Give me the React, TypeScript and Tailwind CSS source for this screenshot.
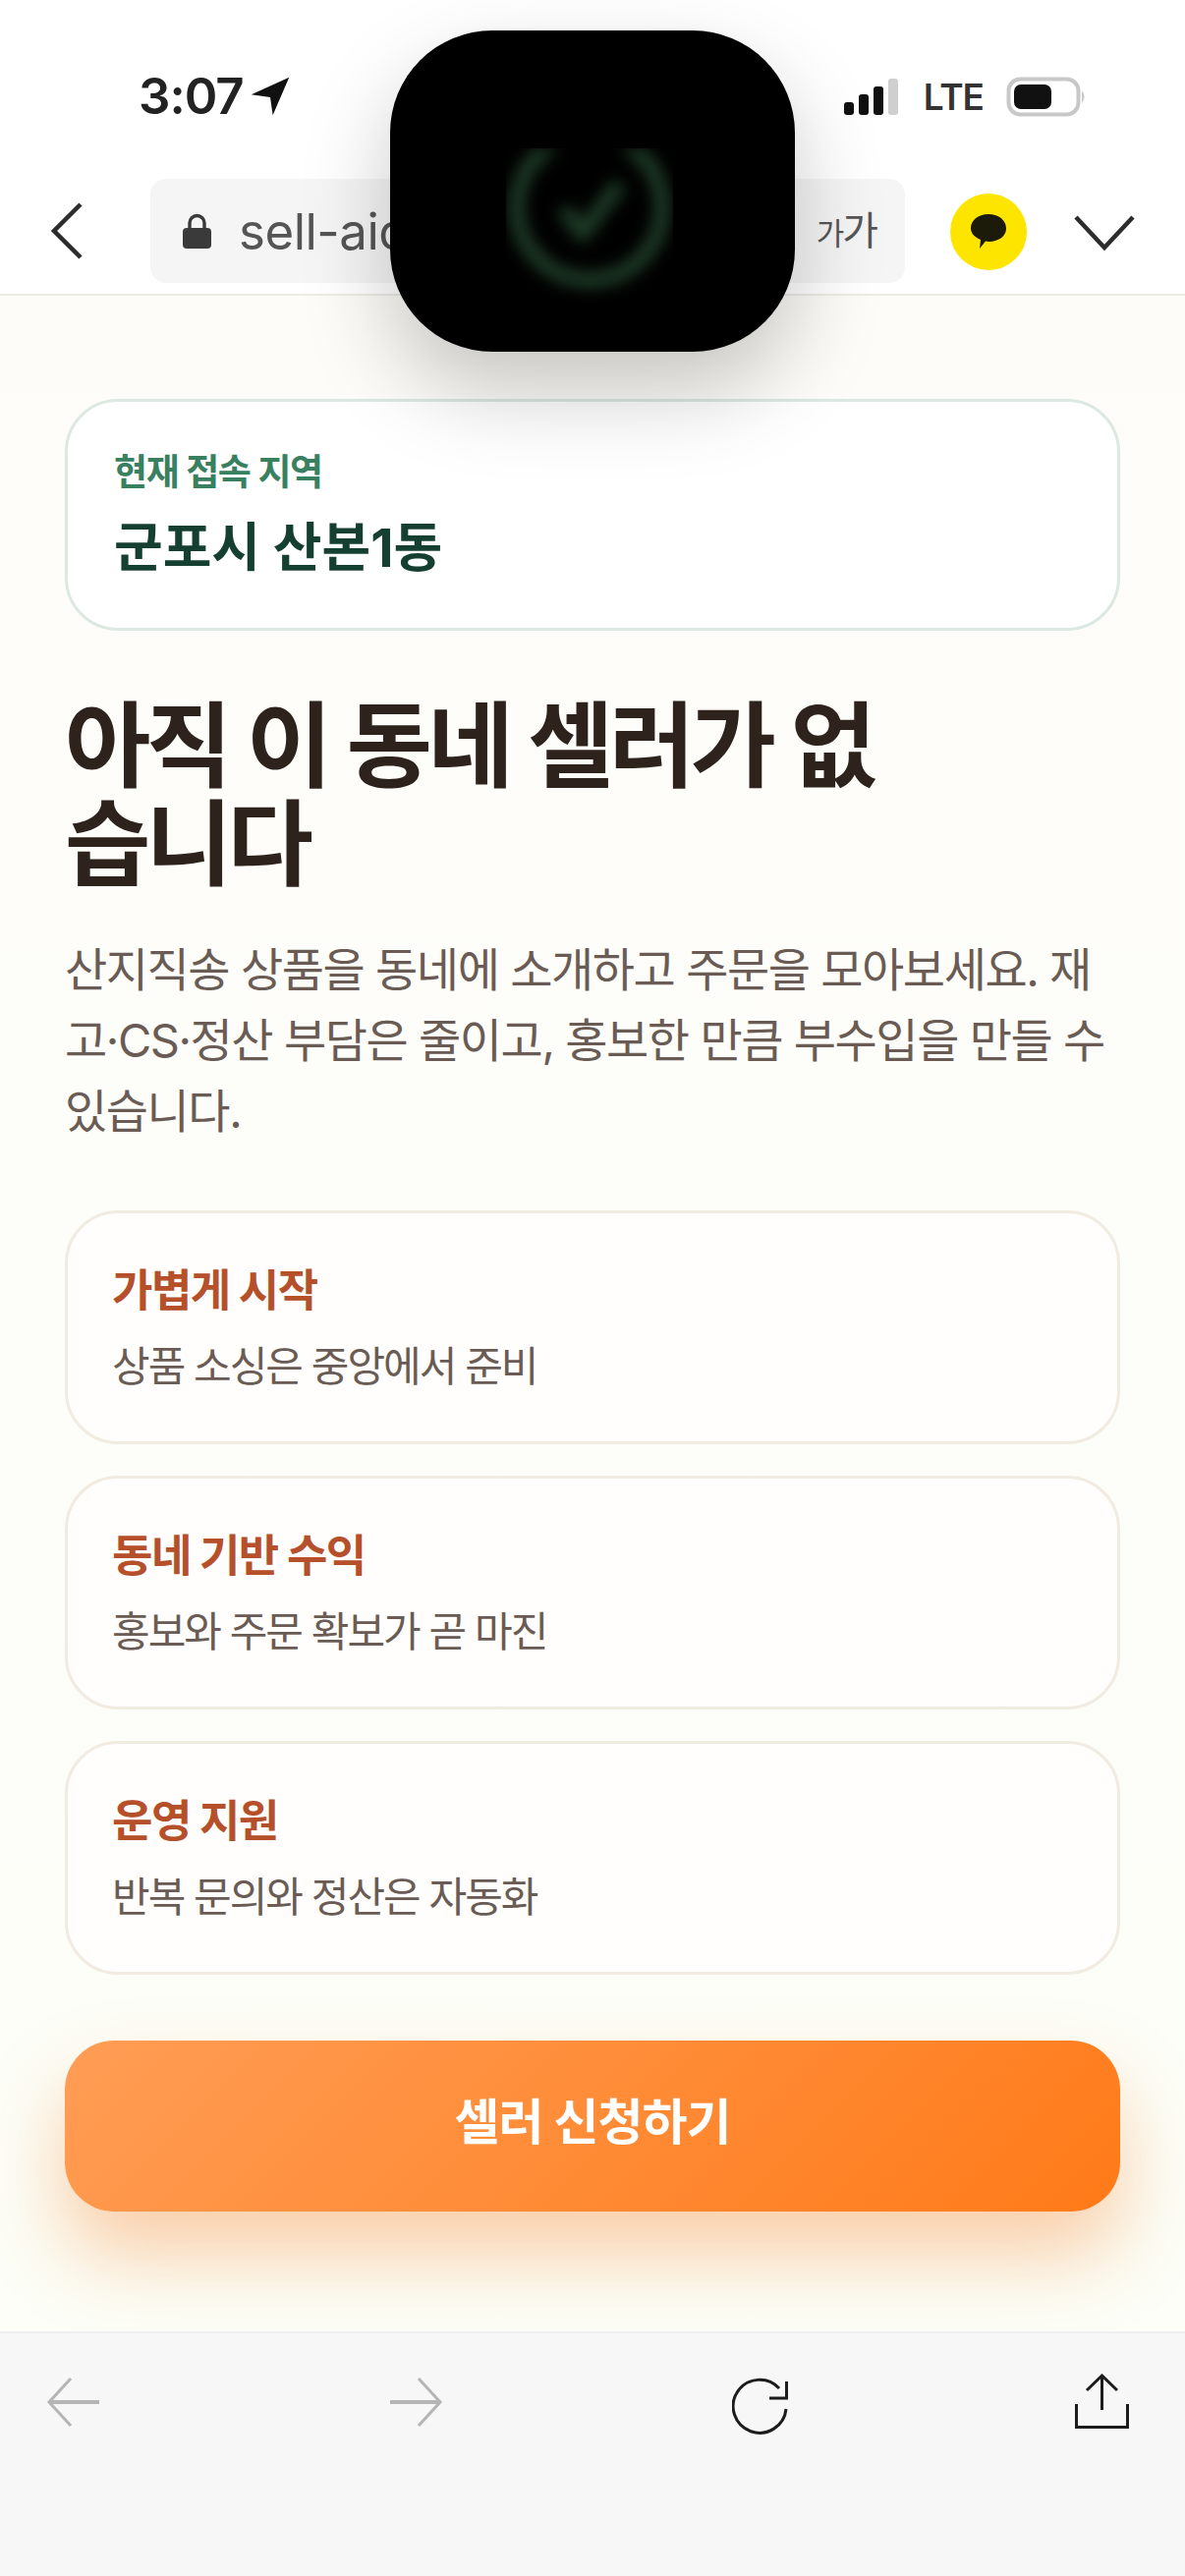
import React from "react";

const benefits = [
  { title: "가볍게 시작", desc: "상품 소싱은 중앙에서 준비" },
  { title: "동네 기반 수익", desc: "홍보와 주문 확보가 곧 마진" },
  { title: "운영 지원", desc: "반복 문의와 정산은 자동화" },
];

function StatusBar() {
  return (
    <div className="h-[182px] flex items-start justify-between pt-[70px] pl-[141px] pr-[100px] bg-white">
      <div className="flex items-center gap-[6px]">
        <span className="font-semibold text-[51px] leading-[56px] tracking-[-1px] text-[#222]">3:07</span>
        <svg width="42" height="42" viewBox="0 0 24 24">
          <path d="M23 1 L1 11 L12 12.5 L13.5 23 Z" fill="#111" />
        </svg>
      </div>
      <div className="flex items-center h-[56px]">
        <svg width="56" height="37" viewBox="0 0 56 37">
          <rect x="0" y="24" width="10" height="13" rx="3" fill="#111" />
          <rect x="15" y="16" width="10" height="21" rx="3" fill="#111" />
          <rect x="30" y="8" width="10" height="29" rx="3" fill="#111" />
          <rect x="45" y="0" width="10" height="37" rx="3" fill="#cfcfcf" />
        </svg>
        <span className="ml-[25px] font-semibold text-[37px] leading-none text-[#333] tracking-[-1px]">LTE</span>
        <svg width="82" height="41" viewBox="0 0 82 41" className="ml-[23px]">
          <rect x="2.5" y="2.5" width="71" height="36" rx="12" fill="#fff" stroke="#c8c8c8" strokeWidth="4" />
          <rect x="8" y="8" width="38" height="25" rx="7" fill="#111" />
          <path d="M77 14 Q82 20.5 77 27 Z" fill="#c8c8c8" />
        </svg>
      </div>
    </div>
  );
}

function BrowserBar() {
  return (
    <div className="h-[119px] flex items-start bg-white border-b-2 border-[#ecece7]">
      <div className="w-[153px] h-[106px] flex items-center pl-[52px]">
        <svg width="32" height="58" viewBox="0 0 32 58" fill="none" stroke="#2c2c2c" strokeWidth="4.5">
          <path d="M30 2 L3 29 L30 56" />
        </svg>
      </div>
      <div className="w-[768px] h-[106px] bg-[#f5f5f5] rounded-[16px] flex items-center pl-[33px] pr-[29px]">
        <svg width="29" height="36" viewBox="0 0 29 36">
          <path d="M7 16 V10 A7.5 7.5 0 0 1 22 10 V16" fill="none" stroke="#3a3a3a" strokeWidth="3.4" />
          <rect x="0" y="15" width="29" height="21" rx="4" fill="#3a3a3a" />
        </svg>
        <span className="ml-[28px] text-[51px] leading-none text-[#555] tracking-[-0.5px]">sell-aid</span>
        <span className="ml-auto flex items-baseline text-[#555] leading-none tracking-[-2px]">
          <span className="text-[31px]">가</span>
          <span className="text-[40px]">가</span>
        </span>
      </div>
      <div className="ml-[46px] w-[78px] h-[78px] mt-[15px] rounded-full bg-[#fee500] flex items-center justify-center">
        <svg width="42" height="38" viewBox="0 0 40 38">
          <path d="M20 1 C31 1 38 7.5 38 15.5 C38 23.5 30 29 21 29 C19.5 29 18 28.8 17 28.5 L11 36 L12 27 C6 24.5 2 20.5 2 15.5 C2 7.5 9 1 20 1 Z" fill="#1c1a08" />
        </svg>
      </div>
      <div className="ml-[48px] h-[106px] flex items-center">
        <svg width="62" height="37" viewBox="0 0 62 37" fill="none" stroke="#2c2c2c" strokeWidth="4.5" className="mt-[2px]">
          <path d="M2 3 L31 34 L60 3" />
        </svg>
      </div>
    </div>
  );
}

function DynamicIsland() {
  return (
    <div className="absolute left-[397px] top-[31px] w-[412px] h-[327px] rounded-[104px] bg-black shadow-[0_40px_90px_rgba(0,0,0,0.22)] overflow-hidden">
      <div className="absolute left-[118px] top-[120px] w-[170px] h-[170px] overflow-hidden">
        <svg width="170" height="170" viewBox="0 0 170 170" className="blur-[8px]">
          <circle cx="85" cy="60" r="74" fill="none" stroke="#20402a" strokeWidth="15" />
          <path d="M58 62 L78 86 L116 36" fill="none" stroke="#20402a" strokeWidth="15" />
        </svg>
      </div>
    </div>
  );
}

function BenefitCard({ title, desc }: { title: string; desc: string }) {
  return (
    <div className="h-[238px] rounded-[54px] border-[3px] border-[#f1ebe1] bg-[#fffefc] px-[45px] pt-[47px]">
      <div className="text-[45px] leading-[64px] font-bold text-[#b5502a] tracking-[-1.5px]">{title}</div>
      <div className="mt-[14px] text-[42px] leading-[62px] text-[#6a5c54] tracking-[-2px]">{desc}</div>
    </div>
  );
}

export default function App() {
  return (
    <div className="relative w-[1206px] h-[2622px] flex flex-col overflow-hidden bg-white font-['Inter','Noto_Sans_CJK_KR',sans-serif]">
      <StatusBar />
      <BrowserBar />

      <main className="flex-1 px-[66px] pt-[105px] bg-gradient-to-b from-[#fdfcf8] via-[#fdfdf9] to-[#fcfef7]">
        <div className="h-[236px] rounded-[54px] border-[3px] border-[#dce8e2] bg-white px-[47px] pt-[44px]">
          <div className="text-[37px] leading-[56px] font-semibold text-[#38805f] tracking-[-1.4px]">현재 접속 지역</div>
          <div className="mt-[11px] text-[54px] leading-[76px] font-bold text-[#143f31]">군포시 산본1동</div>
        </div>

        <h1 className="mt-[68px] max-w-[900px] text-[95px] leading-[100px] font-semibold text-[#2e221c] tracking-[-4.7px]">
          아직 이 동네 셀러가 없습니다
        </h1>
        <p className="mt-[41px] text-[47px] leading-[72px] text-[#6a5c54] tracking-[-1.45px]">
          산지직송 상품을 동네에 소개하고 주문을 모아보세요. 재고·CS·정산 부담은 줄이고, 홍보한 만큼 부수입을 만들 수 있습니다.
        </p>

        <div className="mt-[65px] flex flex-col gap-[32px]">
          {benefits.map((b) => (
            <BenefitCard key={b.title} title={b.title} desc={b.desc} />
          ))}
        </div>

        <button className="mt-[67px] w-full h-[174px] pb-[8px] rounded-[50px] bg-[linear-gradient(135deg,#ff9d55,#ff7a18)] text-white text-[50px] font-bold tracking-[-1px] shadow-[0_44px_80px_rgba(245,130,40,0.38)]">
          셀러 신청하기
        </button>
      </main>

      <nav className="h-[249px] shrink-0 bg-[#f7f7f8] border-t-2 border-[#efeff1] flex items-start pl-[47px] pt-[41px]">
        <svg width="54" height="50" viewBox="0 0 54 50" fill="none" stroke="#b5b5b5" strokeWidth="3" className="mt-[4px]">
          <path d="M54 25 H3" strokeWidth="4" />
          <path d="M25 1 L3 25 L25 49" />
        </svg>
        <svg width="54" height="50" viewBox="0 0 54 50" fill="none" stroke="#b5b5b5" strokeWidth="3" className="mt-[4px] ml-[296px]">
          <path d="M0 25 H51" strokeWidth="4" />
          <path d="M29 1 L51 25 L29 49" />
        </svg>
        <svg width="58" height="60" viewBox="0 0 58 60" fill="none" stroke="#1c1c1c" strokeWidth="3" className="mt-[3px] ml-[294px]">
          <path d="M55 33 A27 27 0 1 1 48 12" />
          <path d="M38 22 H55.5 V5" />
        </svg>
        <svg width="55" height="56" viewBox="0 0 55 56" fill="none" stroke="#1c1c1c" strokeWidth="3" className="ml-[291px]">
          <path d="M27.5 2 V37 M12 17 L27.5 2 L43 17" />
          <path d="M1.5 31 V54.5 H53.5 V31" />
        </svg>
      </nav>

      <DynamicIsland />
    </div>
  );
}
